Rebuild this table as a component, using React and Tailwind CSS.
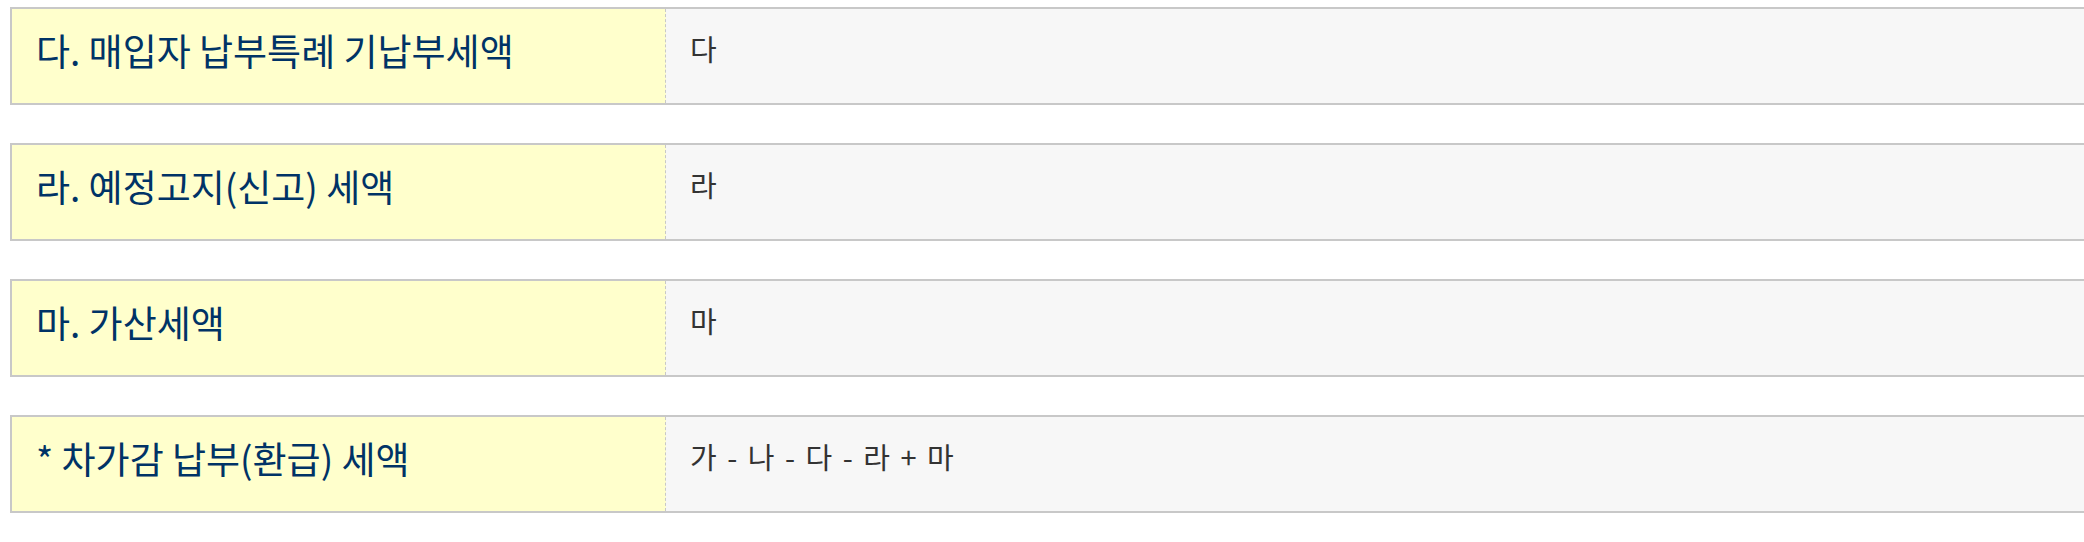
import React from 'react';

const rows = [
    { label: '다. 매입자 납부특례 기납부세액', value: '다' },
    { label: '라. 예정고지(신고) 세액', value: '라' },
    { label: '마. 가산세액', value: '마' },
    { label: '* 차가감 납부(환급) 세액', value: '가 - 나 - 다 - 라 + 마' },
];

const TaxRow = ({ label, value }) => (
    <div className="flex w-[2100px] h-[98px] border-2 border-[#c8c8c8]">
        <div className="w-[654px] shrink-0 flex items-center pl-[24px] pb-[10px] bg-[#ffffcc] border-r border-dashed border-[#c8c8c8] text-[#003366] text-[37px]">
            {label}
        </div>
        <div className="flex-1 flex items-center pl-[24px] pb-[14px] bg-[#f7f7f7] text-[#333333] text-[29px] [word-spacing:4px]">
            {value}
        </div>
    </div>
);

export default function App() {
    return (
        <div
            className="w-full h-[542px] overflow-hidden bg-white pt-[7px] pl-[10px] flex flex-col gap-[38px]"
            style={{ fontFamily: '"Noto Sans CJK KR", "Noto Sans", sans-serif' }}
        >
            {rows.map((row, i) => (
                <TaxRow key={i} label={row.label} value={row.value} />
            ))}
        </div>
    );
}
